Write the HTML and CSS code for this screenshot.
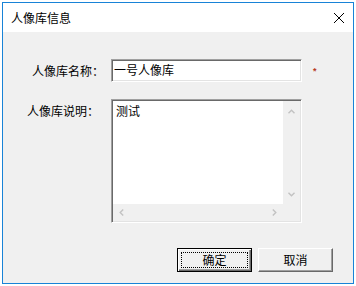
FILE: index.html
```html
<!DOCTYPE html>
<html lang="zh-CN">
<head>
<meta charset="utf-8">
<title>人像库信息</title>
<link rel="stylesheet" href="styles.css">
</head>
<body>
<div class="window">
  <div class="titlebar">
    <span class="title">人像库信息</span>
    <svg class="close" width="10" height="10" viewBox="0 0 10 10"><path d="M0 0 L10 10 M10 0 L0 10" stroke="#000" stroke-width="1" fill="none"/></svg>
  </div>
  <div class="content">
    <div class="form">
      <div class="label label-name">人像库名称：</div>
      <div class="input">一号人像库</div>
      <div class="req">*</div>
      <div class="label label-desc">人像库说明：</div>
      <div class="textarea">
        <div class="ta-text">测试</div>
        <div class="vscroll">
          <svg width="7" height="5" viewBox="0 0 7 5"><path d="M0.5 4.2 L3.5 1.2 L6.5 4.2" stroke="#c2c2c2" stroke-width="1.4" fill="none"/></svg>
          <svg width="7" height="5" viewBox="0 0 7 5"><path d="M0.5 0.8 L3.5 3.8 L6.5 0.8" stroke="#c2c2c2" stroke-width="1.4" fill="none"/></svg>
        </div>
        <div class="hscroll">
          <svg width="5" height="7" viewBox="0 0 5 7"><path d="M4.2 0.5 L1.2 3.5 L4.2 6.5" stroke="#c2c2c2" stroke-width="1.4" fill="none"/></svg>
          <svg width="5" height="7" viewBox="0 0 5 7"><path d="M0.8 0.5 L3.8 3.5 L0.8 6.5" stroke="#c2c2c2" stroke-width="1.4" fill="none"/></svg>
        </div>
        <div class="corner"></div>
      </div>
    </div>
    <div class="buttons">
      <div class="btn btn-default"><span class="focus">确定</span></div>
      <div class="btn">取消</div>
    </div>
  </div>
</div>
</body>
</html>
```
FILE: styles.css
```css
html, body {
  margin: 0;
  padding: 0;
  background: #ffffff;
}
body {
  padding: 2px;
  font-family: "Noto Sans CJK SC", "Noto Sans", sans-serif;
  font-size: 12px;
  color: #000;
}
.window {
  box-sizing: border-box;
  width: 352px;
  height: 282px;
  border: 1px solid #1883d7;
  background: #f0f0f0;
  display: flex;
  flex-direction: column;
}
.titlebar {
  height: 29px;
  background: #ffffff;
  display: flex;
  align-items: center;
  justify-content: space-between;
  padding: 0 9px 0 8px;
  flex: none;
}
.title {
  font-size: 12px;
  line-height: 16px;
}
.close {
  display: block;
}
.content {
  flex: 1;
  display: flex;
  flex-direction: column;
  padding-top: 27px;
}
.form {
  display: grid;
  grid-template-columns: 108px 191px auto;
  row-gap: 17px;
}
.label {
  line-height: 16px;
}
.label-name {
  align-self: center;
  padding-left: 29px;
}
.label-desc {
  padding-left: 24px;
  padding-top: 4px;
}
.input {
  box-sizing: border-box;
  height: 23px;
  background: #fff;
  border: 1px solid;
  border-color: #a0a0a0 #ffffff #ffffff #a0a0a0;
  box-shadow: inset 1px 1px 0 #696969, inset -1px -1px 0 #e3e3e3;
  padding: 0 0 0 2px;
  line-height: 20px;
  font-size: 12px;
}
.req {
  align-self: center;
  padding-left: 11px;
  color: #b83a1e;
  font-size: 9px;
  line-height: 10px;
  font-family: "Liberation Sans", sans-serif;
  font-weight: bold;
}
.textarea {
  box-sizing: border-box;
  height: 124px;
  border: 1px solid;
  border-color: #a0a0a0 #ffffff #ffffff #a0a0a0;
  box-shadow: inset 1px 1px 0 #696969, inset -1px -1px 0 #e3e3e3;
  padding: 1px;
  display: grid;
  grid-template-columns: 1fr 17px;
  grid-template-rows: 1fr 17px;
}
.ta-text {
  background: #fff;
  padding: 2px 0 0 3px;
  line-height: 16px;
  font-size: 12px;
}
.vscroll {
  background: #f0f0f0;
  display: flex;
  flex-direction: column;
  justify-content: space-between;
  align-items: center;
  padding: 8px 0 7px;
}
.hscroll {
  background: #f0f0f0;
  display: flex;
  justify-content: space-between;
  align-items: center;
  padding: 0 6px 0 6px;
}
.vscroll svg, .hscroll svg {
  display: block;
}
.corner {
  background: #f0f0f0;
}
.buttons {
  display: flex;
  justify-content: flex-end;
  gap: 6px;
  padding-right: 20px;
  margin-top: 25px;
}
.btn {
  box-sizing: border-box;
  width: 75px;
  height: 24px;
  background: #f0f0f0;
  border: 1px solid;
  border-color: #ffffff #696969 #696969 #ffffff;
  box-shadow: inset -1px -1px 0 #a0a0a0;
  display: flex;
  align-items: center;
  justify-content: center;
  font-size: 12px;
  line-height: 16px;
}
.btn-default {
  border: 1px solid #000;
  box-shadow: inset 1px 1px 0 #ffffff, inset -1px -1px 0 #696969, inset -2px -2px 0 #a0a0a0;
  padding: 3px;
}
.focus {
  box-sizing: border-box;
  width: 100%;
  height: 100%;
  border: 1px dotted #000;
  display: flex;
  align-items: center;
  justify-content: center;
}
```
